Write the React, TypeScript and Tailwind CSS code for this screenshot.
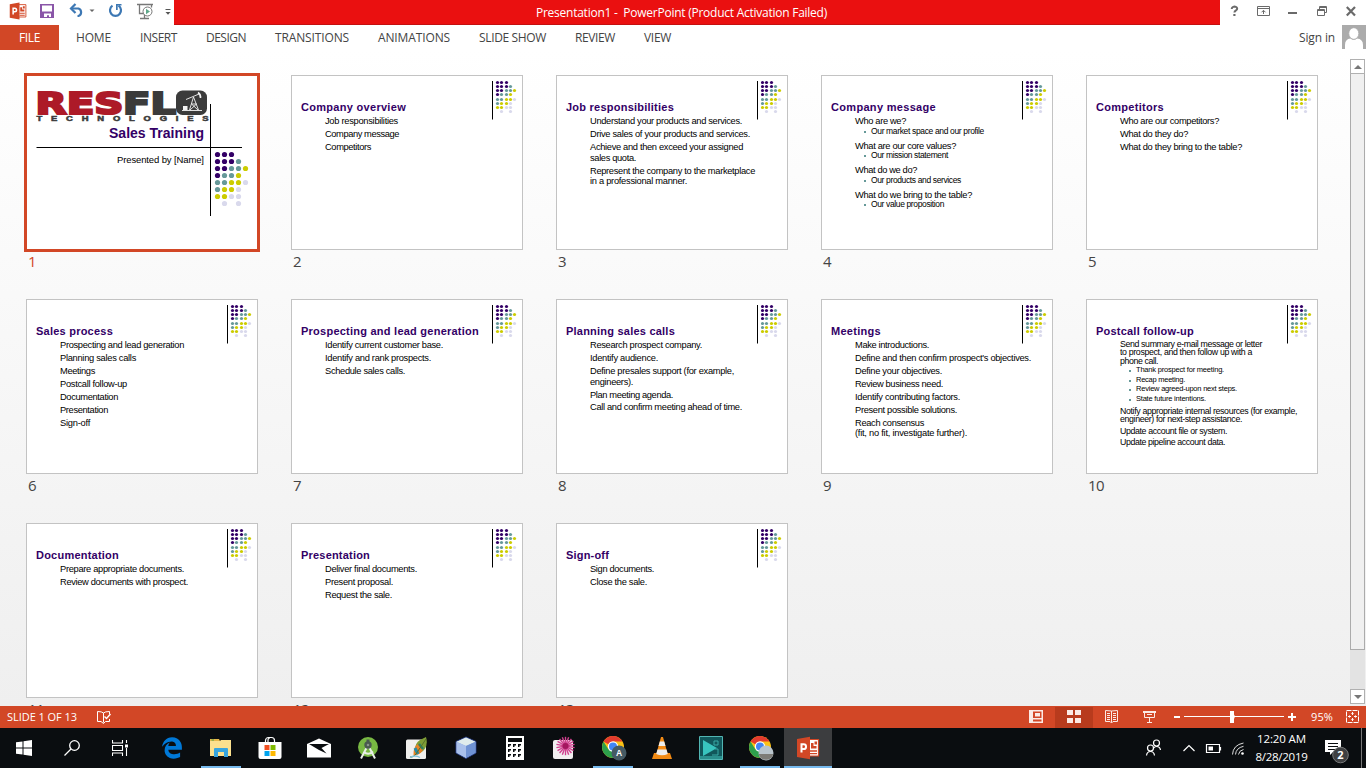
import { useLayoutEffect, useRef, useState, type ReactNode } from "react";
import { FaEdgeLegacy } from "react-icons/fa";

/* Text tracked so that it fills the given width. */
function Fit({ w, className = "", children }: { w: number; className?: string; children: string }) {
  const ref = useRef<HTMLSpanElement>(null);
  const [spacing, setSpacing] = useState(0);
  useLayoutEffect(() => {
    const el = ref.current;
    if (!el) return;
    el.style.letterSpacing = "0px";
    const natural = el.getBoundingClientRect().width;
    const next = (w - natural) / children.length;
    el.style.letterSpacing = `${next}px`;
    setSpacing(next);
  }, [w, children]);
  return (
    <span ref={ref} className={`inline-block whitespace-pre ${className}`} style={{ letterSpacing: spacing }}>
      {children}
    </span>
  );
}

const UI = "font-['Open_Sans','Noto_Sans',sans-serif]";
const ARIAL = "font-['Liberation_Sans',Arial,sans-serif]";

const DOTS = ["PPP", "PPPT", "PPTTY", "PTTY", "TTYYL", "TYYL", "YYLL", " L L"];
const DOT_COLOR: Record<string, string> = { P: "#330066", T: "#669999", Y: "#cccc00", L: "#d9d9ec" };

function Dots({ xs, ys, r }: { xs: number[]; ys: number[]; r: number }) {
  return (
    <>
      {DOTS.flatMap((row, j) =>
        row.split("").map((c, i) =>
          c === " " ? null : <circle key={`${i}-${j}`} cx={xs[i]} cy={ys[j]} r={r} fill={DOT_COLOR[c]} />
        )
      )}
    </>
  );
}

type Line = { t: string; w: number; h?: string; k?: "sub" | "small" | "smallSub" };
type SlideData = { title: string; tw: number; lines: Line[] };

const slides: SlideData[] = [
  {
    title: "Company overview", tw: 105,
    lines: [
      { t: "Job responsibilities", w: 73 },
      { t: "Company message", w: 74 },
      { t: "Competitors", w: 46 },
    ],
  },
  {
    title: "Job responsibilities", tw: 108,
    lines: [
      { t: "Understand your products and services.", w: 152 },
      { t: "Drive sales of your products and services.", w: 160 },
      { t: "Achieve and then exceed your assigned", w: 153 },
      { t: "sales quota.", w: 46, h: "h-[11px]" },
      { t: "Represent the company to the marketplace", w: 165 },
      { t: "in a professional manner.", w: 97, h: "h-[10px]" },
    ],
  },
  {
    title: "Company message", tw: 105,
    lines: [
      { t: "Who are we?", w: 51 },
      { t: "Our market space and our profile", w: 113, h: "h-[10px]", k: "sub" },
      { t: "What are our core values?", w: 101, h: "h-[15px]" },
      { t: "Our mission statement", w: 77, h: "h-[9px]", k: "sub" },
      { t: "What do we do?", w: 62, h: "h-[15px]" },
      { t: "Our products and services", w: 90, h: "h-[10px]", k: "sub" },
      { t: "What do we bring to the table?", w: 117, h: "h-[15px]" },
      { t: "Our value proposition", w: 73, h: "h-[9px]", k: "sub" },
    ],
  },
  {
    title: "Competitors", tw: 68,
    lines: [
      { t: "Who are our competitors?", w: 99 },
      { t: "What do they do?", w: 68 },
      { t: "What do they bring to the table?", w: 122 },
    ],
  },
  {
    title: "Sales process", tw: 77,
    lines: [
      { t: "Prospecting and lead generation", w: 124 },
      { t: "Planning sales calls", w: 76 },
      { t: "Meetings", w: 35 },
      { t: "Postcall follow-up", w: 67 },
      { t: "Documentation", w: 58 },
      { t: "Presentation", w: 48 },
      { t: "Sign-off", w: 30 },
    ],
  },
  {
    title: "Prospecting and lead generation", tw: 178,
    lines: [
      { t: "Identify current customer base.", w: 118 },
      { t: "Identify and rank prospects.", w: 106 },
      { t: "Schedule sales calls.", w: 80 },
    ],
  },
  {
    title: "Planning sales calls", tw: 109,
    lines: [
      { t: "Research prospect company.", w: 112 },
      { t: "Identify audience.", w: 68 },
      { t: "Define presales support (for example,", w: 144 },
      { t: "engineers).", w: 43, h: "h-[11px]" },
      { t: "Plan meeting agenda.", w: 83 },
      { t: "Call and confirm meeting ahead of time.", w: 152, h: "h-[12px]" },
    ],
  },
  {
    title: "Meetings", tw: 50,
    lines: [
      { t: "Make introductions.", w: 74 },
      { t: "Define and then confirm prospect's objectives.", w: 176 },
      { t: "Define your objectives.", w: 87 },
      { t: "Review business need.", w: 88 },
      { t: "Identify contributing factors.", w: 105 },
      { t: "Present possible solutions.", w: 102 },
      { t: "Reach consensus", w: 69 },
      { t: "(fit, no fit, investigate further).", w: 112, h: "h-[10px]" },
    ],
  },
  {
    title: "Postcall follow-up", tw: 98,
    lines: [
      { t: "Send summary e-mail message or letter", w: 142, h: "h-[12px]", k: "small" },
      { t: "to prospect, and then follow up with a", w: 132, h: "h-2", k: "small" },
      { t: "phone call.", w: 38, h: "h-[9px]", k: "small" },
      { t: "Thank prospect for meeting.", w: 88, h: "h-[9px]", k: "smallSub" },
      { t: "Recap meeting.", w: 49, h: "h-[10px]", k: "smallSub" },
      { t: "Review agreed-upon next steps.", w: 101, h: "h-[9px]", k: "smallSub" },
      { t: "State future intentions.", w: 70, h: "h-[10px]", k: "smallSub" },
      { t: "Notify appropriate internal resources (for example,", w: 177, h: "h-[12px]", k: "small" },
      { t: "engineer) for next-step assistance.", w: 122, h: "h-2", k: "small" },
      { t: "Update account file or system.", w: 107, h: "h-[12px]", k: "small" },
      { t: "Update pipeline account data.", w: 105, h: "h-[11px]", k: "small" },
    ],
  },
  {
    title: "Documentation", tw: 83,
    lines: [
      { t: "Prepare appropriate documents.", w: 124 },
      { t: "Review documents with prospect.", w: 128 },
    ],
  },
  {
    title: "Presentation", tw: 69,
    lines: [
      { t: "Deliver final documents.", w: 92 },
      { t: "Present proposal.", w: 68 },
      { t: "Request the sale.", w: 67 },
    ],
  },
  {
    title: "Sign-off", tw: 43,
    lines: [
      { t: "Sign documents.", w: 64 },
      { t: "Close the sale.", w: 57 },
    ],
  },
];

const LINE_STYLE = {
  body: "text-[9.3px]",
  sub: "text-[8.5px]",
  small: "text-[8.8px]",
  smallSub: "text-[7.5px]",
};

function SlideLine({ line }: { line: Line }) {
  const nested = line.k === "sub" || line.k === "smallSub";
  return (
    <div className={`flex items-end ${line.h ?? "h-[13px]"} ${nested ? "pl-[42px]" : "pl-[33px]"}`}>
      {nested && <i className="mb-[3px] mr-[5px] h-[2px] w-[2px] shrink-0 bg-[#669999]" />}
      <Fit w={line.w} className={`leading-[10px] ${LINE_STYLE[line.k ?? "body"]}`}>
        {line.t}
      </Fit>
    </div>
  );
}

function ContentSlide({ s }: { s: SlideData }) {
  return (
    <div className={`relative h-[175px] w-[232px] border border-[#c3c3c3] bg-white pt-[25px] text-black ${ARIAL}`}>
      <div className="flex h-3 pl-[9px]">
        <Fit w={s.tw} className="text-[11px] font-bold leading-3 text-[#330066]">{s.title}</Fit>
      </div>
      {s.lines.map((l) => <SlideLine key={l.t} line={l} />)}
      <svg className="absolute left-[199px] top-[4px]" width="28" height="42" viewBox="0 0 28 42">
        <path d="M1.5 1V39.5" stroke="#000" strokeWidth="1" />
        <Dots xs={[6.5, 10.5, 15.5, 19.5, 23.5]} ys={[2.5, 6.5, 10.5, 14.5, 19.5, 23.5, 27.5, 31.5]} r={1.6} />
      </svg>
    </div>
  );
}

function TitleSlide() {
  return (
    <div className="-ml-[2px] -mt-[2px] h-[179px] w-[236px] border-[3px] border-[#d24726] bg-white">
      <svg width="230" height="173" viewBox="27 76 230 173" className={ARIAL}>
        <g fontWeight="700" fontFamily="DejaVu Sans" strokeWidth="2.2">
          <text x="35.5" y="113.500" fontSize="30.500" fill="#ad1a28" stroke="#ad1a28" textLength="88" lengthAdjust="spacingAndGlyphs">RES</text>
          <text x="123" y="113.500" fontSize="30.500" fill="#3b3b3b" stroke="#3b3b3b" textLength="53" lengthAdjust="spacingAndGlyphs">FL</text>
        </g>
        <rect x="176" y="90.5" width="31" height="24.5" rx="6.5" fill="#3b3b3b" />
        <g stroke="#f4f4f4" fill="none" strokeWidth=".9">
          <path d="M182 110.500H202M189.500 110L193.500 97L198.500 110M191.500 104H196.500L190 110M191.500 104L198 110M186 99.500L199 94" />
          <path d="M198 92.500Q201 94.500 200.500 98" strokeWidth="1.600" />
          <path d="M183 106H187.500V110H183z" fill="#f4f4f4" stroke="none" />
        </g>
        <text x="36.500" y="121.500" fontSize="7" fontWeight="700" fill="#3b3b3b" stroke="#3b3b3b" strokeWidth=".5" transform="translate(36.500 0) scale(1.35 1) translate(-36.500 0)" textLength="127.500" className={ARIAL}>TECHNOLOGIES</text>
        <text x="109" y="138" fontSize="14" fontWeight="700" fill="#330066" textLength="95">Sales Training</text>
        <text x="117" y="163" fontSize="9.500" textLength="87">Presented by [Name]</text>
        <path d="M36.500 147.500H242M210.500 104V216" stroke="#000" strokeWidth="1" />
        <Dots xs={[217.5, 224.5, 231.5, 238.5, 245.5]} ys={[154.5, 161.5, 168.5, 175.5, 182.5, 189.5, 196.5, 203.5]} r={2.6} />
      </svg>
    </div>
  );
}

function SlideCell({ n, children }: { n: number; children: ReactNode }) {
  return (
    <div className="h-[224px] w-[265px]">
      <div className="flow-root h-[175px]">{children}</div>
      <div className={`pl-[2px] text-[15px] leading-[22px] ${UI} ${n === 1 ? "text-[#d24726]" : "text-[#444]"}`}>
        <Fit w={n > 9 ? 16 : 8}>{String(n)}</Fit>
      </div>
    </div>
  );
}

/* ---------- window chrome ---------- */

function PptLogo({ size }: { size: number }) {
  return (
    <svg width={size} height={size} viewBox="0 0 24 24">
      <path d="M12 3.500H22.500V20H12z" fill="#fff" stroke="#d24726" strokeWidth="1.200" />
      <path d="M15 7H17.500V10H20.500V12.500H15zM18.500 5.500H21V8.500H18.500zM14 14.300H21V15.800H14zM14 17H21V18.300H14z" fill="#d24726" />
      <path d="M1 3L14 .8V23.200L1 21z" fill="#d24726" />
      <path d="M5.500 16.500V8.300H7.700a2.300 2.300 0 0 1 0 4.700H5.500" fill="none" stroke="#fff" strokeWidth="2" />
    </svg>
  );
}

function QuickAccess() {
  return (
    <div className="flex h-[25px] w-[174px] items-start">
      <div className="ml-[9px] mt-[2px] w-[18px]"><PptLogo size={18} /></div>
      <svg className="ml-[13px] mt-[4px]" width="14" height="14" viewBox="0 0 14 14">
        <path d="M0 0H14V14H0z" fill="#8a56a8" />
        <path d="M2 1.500H12V7.500H2zM4 9.500H11V13H9V11.300H7V13H4z" fill="#fff" />
      </svg>
      <svg className="ml-[15px] mt-[3px]" width="28" height="15" viewBox="0 0 28 15">
        <path d="M2 5.500H9.500a4 4 0 0 1 0 7.500H8.500" fill="none" stroke="#3d78b4" strokeWidth="2.200" />
        <path d="M6.500 1L2 5.500L6.500 10" fill="none" stroke="#3d78b4" strokeWidth="2.200" />
        <path d="M20.500 6.500H25.500L23 9z" fill="#666" />
      </svg>
      <svg className="ml-[11px] mt-[3px]" width="15" height="15" viewBox="0 0 15 15">
        <path d="M4.500 2.700A5.500 5.500 0 1 0 10.500 2.700" fill="none" stroke="#3d78b4" strokeWidth="2.200" />
        <path d="M8 1H13.500V2.500H9.700V7H8z" fill="#3d78b4" />
      </svg>
      <svg className="ml-[14px] mt-[3px]" width="17" height="17" viewBox="0 0 17 17">
        <path d="M0 1.500H16M2.500 2V10.500H7M14.500 2V4.500M7.500 11V15M3 15.500H12" fill="none" stroke="#777" strokeWidth="1.300" />
        <circle cx="10.500" cy="8.500" r="4.500" fill="#fff" stroke="#777" />
        <path d="M9 5.800V11.200L13 8.500z" fill="#5da88a" />
      </svg>
      <svg className="ml-[11px] mt-[9px]" width="6" height="6" viewBox="0 0 6 6">
        <path d="M.5.500H5.500" stroke="#555" />
        <path d="M.5 3H5.500L3 5.800z" fill="#555" />
      </svg>
    </div>
  );
}

function WindowButtons() {
  return (
    <svg width="146" height="25" viewBox="1220 0 146 25" fill="none" stroke="#6a6a6a">
      <path d="M1231.800 9V8.500a2.700 2 0 1 1 4.200 1.800q-1.500.9-1.600 2.200" strokeWidth="2" />
      <path d="M1233.300 14H1235.500V16H1233.300z" fill="#6a6a6a" stroke="none" />
      <path d="M1257.500 6.500H1269.500V15.500H1257.500zM1257.500 8.500H1269.500M1263.500 14V10.500M1261.500 12.300L1263.500 10.300L1265.500 12.300" />
      <path d="M1288 13H1297" strokeWidth="2" />
      <path d="M1317.500 9.500H1324.500V15.500H1317.500zM1317.500 10.500H1324.500M1319.500 9V6.500H1326.500V12.500H1325M1319.500 7.500H1326.500" />
      <path d="M1346.800 7L1355 15.500M1355 7L1346.800 15.500" strokeWidth="2.200" />
    </svg>
  );
}

const tabs: [string, number][] = [
  ["HOME", 35], ["INSERT", 37], ["DESIGN", 40], ["TRANSITIONS", 74],
  ["ANIMATIONS", 72], ["SLIDE SHOW", 67], ["REVIEW", 40], ["VIEW", 27],
];

function Scrollbar() {
  return (
    <div className="mt-[9px] flex h-[645px] w-[15px] flex-col bg-[#e3e3e3]">
      <div className="flex h-[15px] shrink-0 items-center justify-center border border-[#b0b0b0] bg-white">
        <svg width="8" height="4" viewBox="0 0 8 4"><path d="M4 0L8 4H0z" fill="#777" /></svg>
      </div>
      <div className="h-[576px] border border-t-0 border-[#ababab] bg-[#f0f0f0]" />
      <div className="mt-auto flex h-[15px] shrink-0 items-center justify-center border border-[#b0b0b0] bg-white">
        <svg width="8" height="4" viewBox="0 0 8 4"><path d="M0 0H8L4 4z" fill="#777" /></svg>
      </div>
    </div>
  );
}

function StatusBar() {
  return (
    <div className={`flex h-[22px] shrink-0 items-center bg-[#d24726] text-[11px] text-white ${UI}`}>
      <Fit w={70} className="ml-[7px] leading-[22px]">SLIDE 1 OF 13</Fit>
      <svg className="ml-[19px]" width="16" height="14" viewBox="0 0 16 14" fill="none" stroke="#fff">
        <path d="M7.500 12.500V3Q6 1.500 1.500 1.500V11.500H5L7.500 13.500L9.500 11.500H13.500V9M7.500 3Q9 1.500 13.500 1.500V4" />
        <path d="M8.500 6.500L10.500 8.500L14.500 4" strokeWidth="1.400" />
      </svg>
      <svg className="ml-auto" width="41" height="22" viewBox="1014 706 41 22">
        <path d="M1029 710H1043V723H1029z" fill="#fbeae5" />
        <path d="M1033 711.500H1041.500V718H1033zM1033 719.500H1041.500V721.500H1033z" fill="#d24726" />
        <path d="M1035 713H1040V716.500H1035z" fill="#fbeae5" />
      </svg>
      <div className="mt-px flex h-[21px] w-[38px] items-center justify-center bg-[#b83b1d]">
        <div className="-mt-[2px] grid grid-cols-2 gap-x-[2px] gap-y-[3px]">
          {[0, 1, 2, 3].map((i) => <i key={i} className="h-[5px] w-[6px] bg-[#fbeae5]" />)}
        </div>
      </div>
      <svg width="218" height="22" viewBox="1093 706 218 22" fill="none" stroke="#fbeae5">
        <path d="M1111.500 722.500V711L1105.500 710.500V721.500H1110L1111.500 723L1113 721.500H1117.500V710.500L1111.500 711M1107 713.500H1110M1107 715.500H1110M1107 717.500H1110M1107 719.500H1110M1113 713.500H1116M1113 715.500H1116M1113 717.500H1116M1113 719.500H1116" />
        <path d="M1143 712H1156" strokeWidth="2" />
        <path d="M1144.500 712V717.500H1154.500V712M1147 714.500H1152M1149.500 718V722M1147 722.500H1152" />
        <path d="M1174 717H1180M1288 717H1296M1292 713V721" stroke="#fff" strokeWidth="2" />
        <path d="M1184 716.500H1284" stroke="#fff" />
        <path d="M1230 711H1234V714.500L1235 716.500L1234 719V723H1230z" fill="#fff" stroke="none" />
      </svg>
      <div className="flex w-[35px]"><Fit w={22} className="leading-[22px]">95%</Fit></div>
      <svg className="mr-[6px]" width="14" height="14" viewBox="0 0 14 14" fill="none" stroke="#fff">
        <path d="M.5.500H12.500V12.500H.5z" strokeDasharray="5 1" />
        <path d="M6.500 2V5M6.500 8V11M2 6.500H5M8 6.500H11" />
        <path d="M5 3.500H8M5 9.500H8M3.500 5V8M9.500 5V8" strokeWidth=".6" />
      </svg>
    </div>
  );
}

/* ---------- taskbar ---------- */

function Slot({ wide, running, active, children }: { wide?: boolean; running?: boolean; active?: boolean; children: ReactNode }) {
  return (
    <div className={`relative flex h-10 shrink-0 items-center justify-center ${wide ? "w-[49px]" : "w-12"} ${active ? "bg-[#3c3d3f]" : ""}`}>
      {children}
      {(running || active) && <i className={`absolute bottom-0 h-[2px] bg-[#76b9ed] ${active ? "w-full" : "w-10"}`} />}
    </div>
  );
}

function Chrome({ children }: { children: ReactNode }) {
  return (
    <svg className="ml-[2px]" width="26" height="26" viewBox="0 0 26 26">
      <circle cx="12" cy="12" r="11" fill="#fbc116" />
      <path d="M12 12L2.500 6.500A11 11 0 0 1 21.500 6.500H12z" fill="#e33b2e" />
      <path d="M2.500 6.500A11 11 0 0 0 12 23L16.500 14.500L7.500 14.500z" fill="#2da04c" />
      <circle cx="12" cy="11.500" r="5.200" fill="#fff" />
      <circle cx="12" cy="11.500" r="4" fill="#4285f4" />
      {children}
    </svg>
  );
}

const petals = Array.from({ length: 18 }, (_, i) => i * 20);

function Taskbar() {
  return (
    <div className="flex h-10 shrink-0 bg-[#0a0d10] text-white">
      <Slot>
        <svg width="16" height="16" viewBox="0 0 16 16"><path d="M0 2.300L6.500 1.400V7.500H0zM7.500 1.200L16 0V7.500H7.500zM0 8.500H6.500V14.600L0 13.700zM7.500 8.500H16V16L7.500 14.800z" fill="#fff" /></svg>
      </Slot>
      <Slot>
        <svg width="16" height="16" viewBox="0 0 16 16" fill="none" stroke="#fff" strokeWidth="1.300"><circle cx="10.500" cy="5.500" r="4.800" /><path d="M7 9L.5 15.500" /></svg>
      </Slot>
      <Slot>
        <svg width="16" height="16" viewBox="0 0 16 16" fill="none" stroke="#fff" strokeWidth="1.100"><path d="M.5 0V3H10.500V0M.5 5.500H10.500V10.500H.5zM.5 16V13H10.500V16M14.500 0V3M14.500 8V16" /><path d="M13 4.500H16V7.500H13z" fill="#fff" stroke="none" /></svg>
      </Slot>
      <div className="w-[3px]" />
      <Slot wide><FaEdgeLegacy className="h-[22px] w-[22px] text-[#0078d7]" /></Slot>
      <Slot wide running>
        <svg width="22" height="20" viewBox="0 0 22 20">
          <path d="M0 1H9L10 3H21V18H0z" fill="#e8b84a" /><path d="M0 3H10L11 2H21V18H0z" fill="#fbe08e" />
          <path d="M1.500 1.500H4V2.500H1.500z" fill="#4ca64c" />
          <path d="M4 11a1 1 0 0 1 1-1H17a1 1 0 0 1 1 1V19H14V14H8V19H4z" fill="#37a5df" />
        </svg>
      </Slot>
      <Slot wide>
        <svg width="24" height="24" viewBox="0 0 24 24">
          <path d="M7.500 7V4.500a3 3 0 0 1 3-3h3a3 3 0 0 1 3 3V7M10 7V4a2 2 0 0 1 2-2" fill="none" stroke="#fff" strokeWidth="1.200" />
          <path d="M.5 6H23.500V21a2 2 0 0 1-2 2H2.500a2 2 0 0 1-2-2z" fill="#fff" />
          <path d="M6.500 9H11.500V14H6.500z" fill="#f25022" /><path d="M12.500 9H17.500V14H12.500z" fill="#7fba00" />
          <path d="M6.500 15H11.500V20H6.500z" fill="#00a4ef" /><path d="M12.500 15H17.500V20H12.500z" fill="#ffb900" />
        </svg>
      </Slot>
      <Slot wide>
        <svg width="24" height="20" viewBox="0 0 24 20"><path d="M0 6L12 .5L24 6V19.500H0z" fill="#fff" /><path d="M2 6H22L14.500 10L19.500 15.500L12 12z" fill="#0a0d10" /></svg>
      </Slot>
      <Slot wide>
        <svg width="22" height="24" viewBox="0 0 22 24">
          <circle cx="11" cy="11" r="10" fill="#78b843" />
          <path d="M11 9L4 22.500M11 9L18 22.500M6.500 15.500Q11 20 16 15.500" fill="none" stroke="#e8eee8" strokeWidth="2" />
          <circle cx="11" cy="9" r="2.500" fill="#8a958c" stroke="#4a5a50" strokeWidth="2.400" /><path d="M9.500 3.500H12.500V6.500H9.500z" fill="#4a5a50" />
        </svg>
      </Slot>
      <Slot wide>
        <svg width="22" height="24" viewBox="0 0 22 24">
          <rect x="0" y="3.500" width="20" height="19.500" rx="1.500" fill="#f0f0ee" />
          <path d="M9 14Q9 7 14 4L20 1Q23 12 14 17z" fill="#7e9d35" />
          <path d="M7.500 19Q7 11 12 8L17 14Q14 19 8 19.500z" fill="#e98324" />
          <path d="M9 12L12 18" stroke="#248ba8" strokeWidth="3" /><path d="M13 8L17 13" stroke="#2e7f63" strokeWidth="2.500" /><path d="M4 21Q8 22 12 15L20 3" fill="none" stroke="#56702b" />
          <path d="M4 21.500Q9 18.500 14 21.500" fill="none" stroke="#7fc2dc" strokeWidth="1.300" />
        </svg>
      </Slot>
      <Slot wide>
        <svg width="22" height="24" viewBox="0 0 22 24">
          <path d="M11 1L21 5.500V17L11 22.500L1 17V5.500z" fill="#8aa9df" stroke="#22377a" />
          <path d="M11 1.500L20.500 5.700L11 10L1.500 5.700z" fill="#e0ecec" /><path d="M1.500 5.700L11 10V22L1.500 16.700z" fill="#a9c0eb" /><path d="M20.500 5.700L11 10V22L20.500 16.700z" fill="#6f92d3" />
        </svg>
      </Slot>
      <Slot wide>
        <svg width="18" height="24" viewBox="0 0 18 24">
          <path d="M0 0H18V24H0z" fill="#fff" /><path d="M2 2H16V6H2z" fill="#0a0d10" />
          {[8, 13, 18].map((y) => [2, 7, 12].map((x) => <path key={`${x}-${y}`} d={`M${x} ${y}h3v1.500h-1.500v1.500h-1.500z`} fill="#0a0d10" />))}
        </svg>
      </Slot>
      <Slot wide>
        <svg width="24" height="24" viewBox="0 0 24 24">
          <rect x="1" y="4" width="20" height="19" rx="2" fill="#f1eef0" />
          <g stroke="#d0408f" strokeWidth="1.400">
            {petals.map((a) => <path key={a} d="M13.500 10V.800" transform={`rotate(${a} 13.500 10)`} />)}
          </g>
          <circle cx="13.500" cy="10" r="3" fill="#a3175f" />
        </svg>
      </Slot>
      <Slot wide running>
        <Chrome><circle cx="18" cy="18" r="7.500" fill="#455a64" /><text x="18" y="21" fontSize="8.500" fontWeight="700" fill="#fff" textAnchor="middle" className={ARIAL}>A</text></Chrome>
      </Slot>
      <Slot wide>
        <svg width="20" height="24" viewBox="0 0 20 24">
          <path d="M2 17H18L20 23H0z" fill="#f18a14" /><path d="M9 1H11L16 19Q10 22 4 19z" fill="#f38b16" />
          <path d="M7.800 5.500H12.200L13.500 10H6.500zM5.500 13.500H14.500L15.800 18Q10 20.500 4.200 18z" fill="#ededed" />
        </svg>
      </Slot>
      <Slot wide>
        <svg width="24" height="24" viewBox="0 0 24 24">
          <path d="M.5.500H23.500V23.500H.5z" fill="#11575b" stroke="#52b5b3" />
          <path d="M4 4L18 12L4 20z" fill="#38c4be" /><path d="M15 5H19V9H15zM16 13H19V19H13" fill="none" stroke="#38aaa6" />
          <path d="M1 20H23V23H1z" fill="#2a8f8d" />
        </svg>
      </Slot>
      <Slot wide running>
        <Chrome><circle cx="18" cy="18" r="7.500" fill="#b9c4cc" /><path d="M10.700 19H25.300A7.500 7.500 0 0 1 10.700 19" fill="#7d7b76" /></Chrome>
      </Slot>
      <Slot active><PptLogo size={24} /></Slot>
      <svg className="ml-auto" width="116" height="40" viewBox="1140 728 116 40" fill="none" stroke="#fff" strokeWidth="1.200">
        <circle cx="1150.500" cy="748" r="3" /><circle cx="1156.500" cy="743" r="3" />
        <path d="M1146.500 755.500Q1147 751.500 1150.500 751.500T1154.500 755.500M1153.500 748Q1155 746.500 1156.500 746.500Q1160 746.500 1160.500 750" />
        <path d="M1183.500 751L1189 745.500L1194.500 751" />
        <path d="M1206.500 744.500H1219.500V752.500H1206.500z" /><path d="M1208.500 746.500H1213V750.500H1208.500z" fill="#fff" stroke="none" /><path d="M1220.500 747V750.500" />
        <path d="M1232.500 754.500Q1233 745 1243.500 743M1235.500 754.500Q1236 748 1243.500 746.300M1238.500 754.500Q1239 750.500 1243.500 749.500" strokeWidth="1" stroke="#ddd" />
        <circle cx="1242.500" cy="753.500" r="1.300" fill="#fff" stroke="none" />
      </svg>
      <div className={`flex w-[51px] flex-col items-center pt-[2px] text-[11.5px] leading-[18px] ${UI}`}>
        <Fit w={49}>12:20 AM</Fit>
        <Fit w={52}>8/28/2019</Fit>
      </div>
      <svg width="59" height="40" viewBox="1307 728 59 40">
        <path d="M1325 740H1341V752H1333L1330 755V752H1325z" fill="#fff" />
        <path d="M1328 743.500H1338M1328 746.500H1338M1328 749.500H1335" stroke="#0a0d10" />
        <circle cx="1340.500" cy="755" r="7.800" fill="#3f4042" stroke="#77797a" />
        <text x="1340.500" y="759" fontSize="11" fontWeight="700" fill="#fff" textAnchor="middle" className={UI}>2</text>
        <path d="M1361.500 728V768" stroke="#777" />
      </svg>
    </div>
  );
}

export default function App() {
  return (
    <div className="flex h-[768px] w-[1366px] flex-col overflow-hidden bg-white">
      <div className="flex h-[25px] shrink-0">
        <QuickAccess />
        <div className={`flex h-[25px] w-[1046px] border-b border-[#c41010] bg-[#ea1010] pl-[362px] text-[12px] text-white ${UI}`}>
          <Fit w={291} className="leading-[25px]">Presentation1 -  PowerPoint (Product Activation Failed)</Fit>
        </div>
        <WindowButtons />
      </div>
      <div className={`flex h-[25px] shrink-0 text-[12px] leading-[25px] text-[#444] ${UI}`}>
        <div className="flex w-[59px] justify-center bg-[#d24726] text-white"><Fit w={21}>FILE</Fit></div>
        <div className="ml-[17px] flex gap-[29px]">
          {tabs.map(([t, w]) => <Fit key={t} w={w}>{t}</Fit>)}
        </div>
        <Fit w={36} className="ml-auto">Sign in</Fit>
        <svg className="ml-[7px]" width="24" height="24" viewBox="0 0 24 24">
          <path d="M0 0H24V24H0z" fill="#ababab" />
          <path d="M3 24V20Q3 14 8.500 13.500Q11.500 16 15 13.500Q21 14 21 20V24z" fill="#fff" /><ellipse cx="11.800" cy="8.500" rx="5" ry="5.800" fill="#fff" stroke="#ababab" strokeWidth=".8" />
        </svg>
      </div>
      <div className="flex h-[656px] shrink-0 overflow-hidden bg-linear-to-b from-white to-[#efefef] pl-[26px]">
        <div className="-mr-px flex w-[1325px] shrink-0 flex-wrap content-start pt-[25px]">
          <SlideCell n={1}><TitleSlide /></SlideCell>
          {slides.map((s, i) => (
            <SlideCell key={s.title} n={i + 2}><ContentSlide s={s} /></SlideCell>
          ))}
        </div>
        <Scrollbar />
      </div>
      <StatusBar />
      <Taskbar />
    </div>
  );
}
